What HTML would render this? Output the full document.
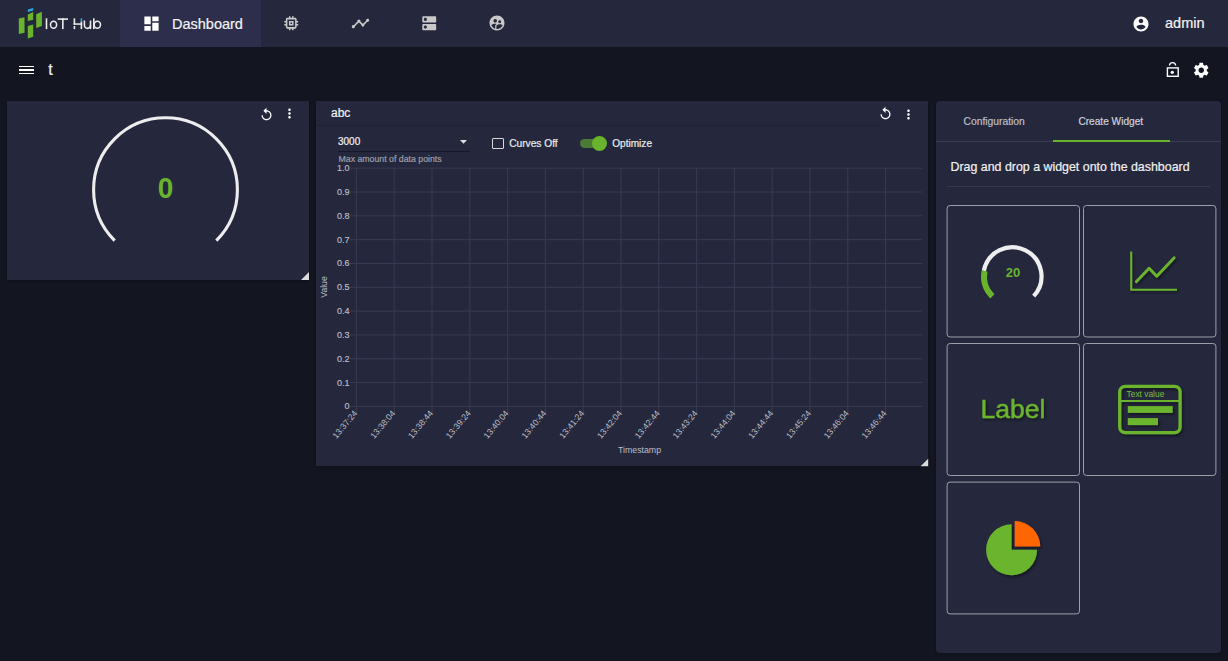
<!DOCTYPE html>
<html><head><meta charset="utf-8">
<style>
*{margin:0;padding:0;box-sizing:border-box}
html,body{width:1228px;height:661px;overflow:hidden;background:#131521;font-family:"Liberation Sans",sans-serif;color:#fff}
.abs{position:absolute}
.card{position:absolute;background:#25283d;box-shadow:0 1px 3px rgba(0,0,0,.3)}
.tile{position:absolute;border:1px solid #80828f;border-radius:3px}
.txt{position:absolute;white-space:nowrap;line-height:1;-webkit-text-stroke:0.2px currentColor}
</style></head><body>
<div class="abs" style="left:0px;top:0px;width:1228px;height:47px;background:#25283c;"></div>
<div class="abs" style="left:120px;top:0px;width:141px;height:47px;background:#2c2e4c;"></div>
<svg class="abs" style="left:0;top:0" width="120" height="47" viewBox="0 0 120 47">
  <polygon points="18.8,18.6 24.5,17.3 24.5,32.8 18.8,34" fill="#6ab42d"/>
  <polygon points="27.8,14.5 33.2,12.1 33.2,19.7 27.8,21.1" fill="#6ab42d"/>
  <polygon points="27.8,9.6 33.2,8 33.2,10.4 27.8,12.1" fill="#29a8e0"/>
  <polygon points="27.8,26 33.2,24.6 33.2,36.8 27.8,38.5" fill="#6ab42d"/>
  <polygon points="36.2,14.25 41.9,11.8 41.9,26 36.2,27.9" fill="#6ab42d"/>
  <g fill="#ececec">
   <rect x="45.7" y="18.3" width="1.6" height="10.8"/>
   <rect x="57.7" y="18.3" width="10.3" height="1.6"/>
   <rect x="62.05" y="18.3" width="1.6" height="10.8"/>
   <rect x="73.6" y="18.3" width="1.6" height="6.3"/>
   <rect x="73.6" y="26.0" width="1.6" height="3.1"/>
   <rect x="73.6" y="23.3" width="8.6" height="1.5"/>
   <rect x="80.6" y="21.4" width="1.6" height="7.7"/>
   <rect x="93" y="18.3" width="1.6" height="10.8"/>
  </g>
  <rect x="80.6" y="18.3" width="1.6" height="3.1" fill="#29a8e0"/>
  <g fill="none" stroke="#ececec" stroke-width="1.55">
   <ellipse cx="53.55" cy="24.8" rx="3.07" ry="3.5"/>
   <path d="M84.4 20.5 V25.3 A3.05 3.05 0 0 0 90.5 25.3 V20.5"/>
   <path d="M90.5 25.3 V29.1"/>
   <ellipse cx="97.35" cy="24.8" rx="3.17" ry="3.5"/>
  </g>
</svg>
<svg class="abs" style="left:141.6px;top:14.4px" width="19" height="19" viewBox="0 0 24 24"><path fill="#fff" d="M3 13h8V3H3v10zm0 8h8v-6H3v6zm10 0h8V11h-8v10zm0-18v6h8V3h-8z"/></svg>
<div class="txt" style="left:172px;top:16.5px;font-size:14.5px;color:#f2f2f2;">Dashboard</div>
<svg class="abs" style="left:281.95px;top:14.2px" width="18.5" height="18.5" viewBox="0 0 24 24"><path fill="#c8c8c8" d="M15 9H9v6h6V9zm-2 4h-2v-2h2v2zm8-2V9h-2V7c0-1.1-.9-2-2-2h-2V3h-2v2h-2V3H9v2H7c-1.1 0-2 .9-2 2v2H3v2h2v2H3v2h2v2c0 1.1.9 2 2 2h2v2h2v-2h2v2h2v-2h2c1.1 0 2-.9 2-2v-2h2v-2h-2v-2h2zm-4 6H7V7h10v10z"/></svg>
<svg class="abs" style="left:350.7px;top:13.5px" width="19" height="19" viewBox="0 0 24 24"><path fill="#c8c8c8" d="M23 8c0 1.1-.9 2-2 2-.18 0-.35-.02-.51-.07l-3.56 3.55c.05.16.07.34.07.52 0 1.1-.9 2-2 2s-2-.9-2-2c0-.18.02-.36.07-.52l-2.55-2.55c-.16.05-.34.07-.52.07s-.36-.02-.52-.07l-4.550 4.56c.05.16.07.33.07.51 0 1.1-.9 2-2 2s-2-.9-2-2 .9-2 2-2c.18 0 .35.02.51.07l4.56-4.55C8.02 9.36 8 9.18 8 9c0-1.1.9-2 2-2s2 .9 2 2c0 .18-.02.36-.07.52l2.55 2.55c.16-.05.34-.07.52-.07s.36.02.52.07l3.55-3.56C19.02 8.35 19 8.18 19 8c0-1.1.9-2 2-2s2 .9 2 2z"/></svg>
<svg class="abs" style="left:419.65px;top:14.1px" width="18.5" height="18.5" viewBox="0 0 24 24"><path fill="#c8c8c8" d="M20 13H4c-.55 0-1 .45-1 1v6c0 .55.45 1 1 1h16c.55 0 1-.45 1-1v-6c0-.55-.45-1-1-1zM7 19c-1.1 0-2-.9-2-2s.9-2 2-2 2 .9 2 2-.9 2-2 2zM20 3H4c-.55 0-1 .45-1 1v6c0 .55.45 1 1 1h16c.55 0 1-.45 1-1V4c0-.55-.45-1-1-1zM7 9c-1.1 0-2-.9-2-2s.9-2 2-2 2 .9 2 2-.9 2-2 2z"/></svg>
<svg class="abs" style="left:488.1px;top:14.3px" width="18" height="18" viewBox="0 0 24 24"><path fill="#c8c8c8" d="M11.99 2c-5.52 0-10 4.48-10 10s4.48 10 10 10 10-4.48 10-10-4.48-10-10-10zm3.61 6.34c1.07 0 1.93.86 1.93 1.93 0 1.07-.86 1.93-1.93 1.93-1.07 0-1.93-.86-1.930-1.93-.01-1.07.86-1.93 1.93-1.93zm-6-1.58c1.3 0 2.36 1.06 2.36 2.36 0 1.3-1.06 2.36-2.36 2.36s-2.36-1.06-2.36-2.36c0-1.31 1.05-2.36 2.36-2.36zm0 9.13v3.75c-2.4-.75-4.3-2.6-5.14-4.96 1.05-1.12 3.67-1.69 5.14-1.69.53 0 1.2.08 1.9.22-1.64.87-1.9 2.02-1.9 2.68zM11.99 20c-.27 0-.53-.01-.79-.04v-4.07c0-1.42 2.94-2.13 4.4-2.13 1.07 0 2.92.39 3.84 1.15-1.17 2.92-4.04 5.09-7.45 5.09z"/></svg>
<svg class="abs" style="left:1131.5px;top:15.2px" width="18" height="18" viewBox="0 0 24 24"><path fill="#fff" d="M12 2C6.48 2 2 6.48 2 12s4.48 10 10 10 10-4.48 10-10S17.52 2 12 2zm0 3c1.66 0 3 1.34 3 3s-1.34 3-3 3-3-1.34-3-3 1.34-3 3-3zm0 14.2c-2.5 0-4.71-1.28-6-3.22.03-1.99 4-3.08 6-3.08 1.99 0 5.970 1.09 6 3.08-1.29 1.94-3.5 3.22-6 3.22z"/></svg>
<div class="txt" style="left:1165px;top:16px;font-size:14.5px;color:#f2f2f2;">admin</div>
<div class="abs" style="left:19.3px;top:65.75px;width:14.4px;height:1.5px;background:#fff;"></div>
<div class="abs" style="left:19.3px;top:69.25px;width:14.4px;height:1.5px;background:#fff;"></div>
<div class="abs" style="left:19.3px;top:72.85px;width:14.4px;height:1.5px;background:#fff;"></div>
<div class="txt" style="left:48.2px;top:61.6px;font-size:16px;color:#f2f2f2;">t</div>
<svg class="abs" style="left:1160px;top:55px" width="25" height="28" viewBox="1160 55 25 28">
 <path d="M1169.5 65.6 A3.05 3.05 0 0 1 1175.6 65.6" fill="none" stroke="#fff" stroke-width="1.3"/>
 <rect x="1167.4" y="67.9" width="10.8" height="8.4" fill="none" stroke="#fff" stroke-width="1.4"/>
 <circle cx="1172.3" cy="72.3" r="1.6" fill="#fff"/>
</svg>
<svg class="abs" style="left:1192.4px;top:60.65px" width="18.5" height="18.5" viewBox="0 0 24 24"><path fill="#fff" d="M19.14 12.94c.04-.3.06-.61.06-.94 0-.32-.02-.64-.07-.94l2.03-1.58c.18-.14.23-.41.12-.61l-1.92-3.32c-.12-.22-.37-.29-.59-.22l-2.39.96c-.5-.38-1.03-.7-1.62-.94l-.36-2.54c-.04-.24-.24-.41-.48-.41h-3.84c-.24 0-.43.17-.47.41l-.36 2.54c-.59.24-1.13.57-1.62.94l-2.39-.96c-.22-.08-.47 0-.59.22L2.74 8.87c-.12.21-.08.47.12.61l2.03 1.58c-.05.3-.09.63-.09.94s.02.64.07.94l-2.03 1.58c-.18.14-.23.41-.12.61l1.92 3.32c.12.22.37.29.59.22l2.39-.96c.5.38 1.03.7 1.62.94l.36 2.54c.05.24.24.41.48.41h3.84c.24 0 .44-.17.47-.41l.36-2.54c.59-.24 1.13-.56 1.62-.94l2.39.96c.22.08.47 0 .59-.22l1.92-3.32c.12-.22.07-.47-.12-.61l-2.01-1.58zM12 15.6c-1.98 0-3.6-1.62-3.6-3.6s1.62-3.6 3.6-3.6 3.6 1.62 3.6 3.6-1.62 3.6-3.6 3.6z"/></svg>
<div class="card" style="left:7px;top:101px;width:302px;height:179px"></div>
<svg class="abs" style="left:7px;top:101px" width="302" height="179" viewBox="7 101 302 179">
  <path d="M 114.66 240.54 A 71.9 71.9 0 1 1 216.34 240.54" fill="none" stroke="#ededed" stroke-width="3.1"/>
  <text transform="translate(165.4,197.6) scale(0.98,1.067)" text-anchor="middle" font-family="Liberation Sans" font-weight="bold" font-size="28.5" fill="#6ab42d">0</text>
  <polygon points="301,280 309,272 309,280" fill="#dcdcdc"/>
</svg>
<svg class="abs" style="left:258.5px;top:106.5px" width="15" height="15" viewBox="0 0 24 24"><path fill="#fff" d="M12 5V1L7 6l5 5V7c3.31 0 6 2.69 6 6s-2.69 6-6 6-6-2.690-6-6H4c0 4.42 3.58 8 8 8s8-3.58 8-8-3.58-8-8-8z"/></svg>
<svg class="abs" style="left:281.8px;top:106px" width="15" height="15" viewBox="0 0 24 24"><path fill="#fff" d="M12 8c1.1 0 2-.9 2-2s-.9-2-2-2-2 .9-2 2 .9 2 2 2zm0 2c-1.1 0-2 .9-2 2s.9 2 2 2 2-.9 2-2-.9-2-2-2zm0 6c-1.1 0-2 .9-2 2s.9 2 2 2 2-.9 2-2-.9-2-2-2z"/></svg>
<div class="card" style="left:316.4px;top:101px;width:611.8px;height:365px"></div>
<div class="abs" style="left:316.4px;top:124.6px;width:565.4px;height:1px;background:#1f2133;"></div>
<div class="txt" style="left:331px;top:107px;font-size:12px;color:#f2f2f2;">abc</div>
<svg class="abs" style="left:877.5px;top:106px" width="15" height="15" viewBox="0 0 24 24"><path fill="#fff" d="M12 5V1L7 6l5 5V7c3.31 0 6 2.69 6 6s-2.69 6-6 6-6-2.690-6-6H4c0 4.42 3.58 8 8 8s8-3.58 8-8-3.58-8-8-8z"/></svg>
<svg class="abs" style="left:901px;top:106.5px" width="15" height="15" viewBox="0 0 24 24"><path fill="#fff" d="M12 8c1.1 0 2-.9 2-2s-.9-2-2-2-2 .9-2 2 .9 2 2 2zm0 2c-1.1 0-2 .9-2 2s.9 2 2 2 2-.9 2-2-.9-2-2-2zm0 6c-1.1 0-2 .9-2 2s.9 2 2 2 2-.9 2-2-.9-2-2-2z"/></svg>
<div class="txt" style="left:338px;top:137px;font-size:10px;color:#f2f2f2;">3000</div>
<svg class="abs" style="left:460px;top:140px" width="8" height="5"><polygon points="0,0 7,0 3.5,3.7" fill="#e0e0e0"/></svg>
<div class="abs" style="left:338px;top:151px;width:132px;height:1px;background:#17192a;"></div>
<div class="txt" style="left:338.5px;top:155px;font-size:8.75px;color:#9c9da6;">Max amount of data points</div>
<div class="abs" style="left:492px;top:138px;width:12px;height:11px;border:1.5px solid #d8d8d8;border-radius:1px"></div>
<div class="txt" style="left:509.2px;top:138.7px;font-size:10.2px;color:#eaeaea;">Curves Off</div>
<div class="abs" style="left:580px;top:139px;width:24px;height:9px;background:#4b7a34;border-radius:4.5px"></div>
<div class="abs" style="left:592px;top:136px;width:15px;height:15px;background:#6ab42d;border-radius:50%"></div>
<div class="txt" style="left:612.2px;top:138.7px;font-size:10.1px;color:#eaeaea;">Optimize</div>
<svg class="abs" style="left:317px;top:101px" width="611" height="365" viewBox="317 101 611 365" font-family="Liberation Sans"><line x1="350" y1="406.40" x2="922.1" y2="406.40" stroke="#383b54"/>
<text x="349.5" y="409.40" text-anchor="end" font-size="9" fill="#bdbdc4" stroke="#bdbdc4" stroke-width="0.15">0</text>
<line x1="350" y1="382.58" x2="922.1" y2="382.58" stroke="#383b54"/>
<text x="349.5" y="385.58" text-anchor="end" font-size="9" fill="#bdbdc4" stroke="#bdbdc4" stroke-width="0.15">0.1</text>
<line x1="350" y1="358.76" x2="922.1" y2="358.76" stroke="#383b54"/>
<text x="349.5" y="361.76" text-anchor="end" font-size="9" fill="#bdbdc4" stroke="#bdbdc4" stroke-width="0.15">0.2</text>
<line x1="350" y1="334.94" x2="922.1" y2="334.94" stroke="#383b54"/>
<text x="349.5" y="337.94" text-anchor="end" font-size="9" fill="#bdbdc4" stroke="#bdbdc4" stroke-width="0.15">0.3</text>
<line x1="350" y1="311.12" x2="922.1" y2="311.12" stroke="#383b54"/>
<text x="349.5" y="314.12" text-anchor="end" font-size="9" fill="#bdbdc4" stroke="#bdbdc4" stroke-width="0.15">0.4</text>
<line x1="350" y1="287.30" x2="922.1" y2="287.30" stroke="#383b54"/>
<text x="349.5" y="290.30" text-anchor="end" font-size="9" fill="#bdbdc4" stroke="#bdbdc4" stroke-width="0.15">0.5</text>
<line x1="350" y1="263.48" x2="922.1" y2="263.48" stroke="#383b54"/>
<text x="349.5" y="266.48" text-anchor="end" font-size="9" fill="#bdbdc4" stroke="#bdbdc4" stroke-width="0.15">0.6</text>
<line x1="350" y1="239.66" x2="922.1" y2="239.66" stroke="#383b54"/>
<text x="349.5" y="242.66" text-anchor="end" font-size="9" fill="#bdbdc4" stroke="#bdbdc4" stroke-width="0.15">0.7</text>
<line x1="350" y1="215.84" x2="922.1" y2="215.84" stroke="#383b54"/>
<text x="349.5" y="218.84" text-anchor="end" font-size="9" fill="#bdbdc4" stroke="#bdbdc4" stroke-width="0.15">0.8</text>
<line x1="350" y1="192.02" x2="922.1" y2="192.02" stroke="#383b54"/>
<text x="349.5" y="195.02" text-anchor="end" font-size="9" fill="#bdbdc4" stroke="#bdbdc4" stroke-width="0.15">0.9</text>
<line x1="350" y1="168.20" x2="922.1" y2="168.20" stroke="#383b54"/>
<text x="349.5" y="171.20" text-anchor="end" font-size="9" fill="#bdbdc4" stroke="#bdbdc4" stroke-width="0.15">1.0</text>
<line x1="356.40" y1="168.2" x2="356.40" y2="412.5" stroke="#383b54"/>
<text transform="translate(357.90,413.5) rotate(-50)" text-anchor="end" font-size="8.6" fill="#bdbdc4">13:37:24</text>
<line x1="394.20" y1="168.2" x2="394.20" y2="412.5" stroke="#383b54"/>
<text transform="translate(395.70,413.5) rotate(-50)" text-anchor="end" font-size="8.6" fill="#bdbdc4">13:38:04</text>
<line x1="432.00" y1="168.2" x2="432.00" y2="412.5" stroke="#383b54"/>
<text transform="translate(433.50,413.5) rotate(-50)" text-anchor="end" font-size="8.6" fill="#bdbdc4">13:38:44</text>
<line x1="469.80" y1="168.2" x2="469.80" y2="412.5" stroke="#383b54"/>
<text transform="translate(471.30,413.5) rotate(-50)" text-anchor="end" font-size="8.6" fill="#bdbdc4">13:39:24</text>
<line x1="507.60" y1="168.2" x2="507.60" y2="412.5" stroke="#383b54"/>
<text transform="translate(509.10,413.5) rotate(-50)" text-anchor="end" font-size="8.6" fill="#bdbdc4">13:40:04</text>
<line x1="545.40" y1="168.2" x2="545.40" y2="412.5" stroke="#383b54"/>
<text transform="translate(546.90,413.5) rotate(-50)" text-anchor="end" font-size="8.6" fill="#bdbdc4">13:40:44</text>
<line x1="583.20" y1="168.2" x2="583.20" y2="412.5" stroke="#383b54"/>
<text transform="translate(584.70,413.5) rotate(-50)" text-anchor="end" font-size="8.6" fill="#bdbdc4">13:41:24</text>
<line x1="621.00" y1="168.2" x2="621.00" y2="412.5" stroke="#383b54"/>
<text transform="translate(622.50,413.5) rotate(-50)" text-anchor="end" font-size="8.6" fill="#bdbdc4">13:42:04</text>
<line x1="658.80" y1="168.2" x2="658.80" y2="412.5" stroke="#383b54"/>
<text transform="translate(660.30,413.5) rotate(-50)" text-anchor="end" font-size="8.6" fill="#bdbdc4">13:42:44</text>
<line x1="696.60" y1="168.2" x2="696.60" y2="412.5" stroke="#383b54"/>
<text transform="translate(698.10,413.5) rotate(-50)" text-anchor="end" font-size="8.6" fill="#bdbdc4">13:43:24</text>
<line x1="734.40" y1="168.2" x2="734.40" y2="412.5" stroke="#383b54"/>
<text transform="translate(735.90,413.5) rotate(-50)" text-anchor="end" font-size="8.6" fill="#bdbdc4">13:44:04</text>
<line x1="772.20" y1="168.2" x2="772.20" y2="412.5" stroke="#383b54"/>
<text transform="translate(773.70,413.5) rotate(-50)" text-anchor="end" font-size="8.6" fill="#bdbdc4">13:44:44</text>
<line x1="810.00" y1="168.2" x2="810.00" y2="412.5" stroke="#383b54"/>
<text transform="translate(811.50,413.5) rotate(-50)" text-anchor="end" font-size="8.6" fill="#bdbdc4">13:45:24</text>
<line x1="847.80" y1="168.2" x2="847.80" y2="412.5" stroke="#383b54"/>
<text transform="translate(849.30,413.5) rotate(-50)" text-anchor="end" font-size="8.6" fill="#bdbdc4">13:46:04</text>
<line x1="885.60" y1="168.2" x2="885.60" y2="412.5" stroke="#383b54"/>
<text transform="translate(887.10,413.5) rotate(-50)" text-anchor="end" font-size="8.6" fill="#bdbdc4">13:46:44</text>
<text transform="translate(327,287) rotate(-90)" text-anchor="middle" font-size="8.6" fill="#bdbdc4">Value</text>
<text x="639.5" y="453" text-anchor="middle" font-size="8.8" fill="#bdbdc4">Timestamp</text></svg>
<svg class="abs" style="left:917px;top:457px" width="12" height="10"><polygon points="3.6,9.3 11.2,1.7 11.2,9.3" fill="#dcdcdc"/></svg>
<div class="card" style="left:936px;top:101px;width:285px;height:552px;border-radius:4px"></div>
<div class="txt" style="left:963.5px;top:116.7px;font-size:10.3px;color:#bdbec6;">Configuration</div>
<div class="txt" style="left:1078.4px;top:116.8px;font-size:10.15px;color:#d0d1d8;">Create Widget</div>
<div class="abs" style="left:936px;top:141px;width:285px;height:1px;background:#3a3d52;"></div>
<div class="abs" style="left:1052.5px;top:139.5px;width:117.5px;height:2px;background:#6ab42d;"></div>
<div class="txt" style="left:950.5px;top:160.5px;font-size:12.4px;color:#f0f0f0;">Drag and drop a widget onto the dashboard</div>
<div class="abs" style="left:947px;top:186px;width:263px;height:1px;background:#353850;"></div>
<svg class="abs" style="left:936px;top:195px" width="285" height="430" viewBox="936 195 285 430"><rect x="947.1" y="205.5" width="132.4" height="131.5" rx="3" fill="none" stroke="#9c9ea9" stroke-width="1"/><rect x="1083.5" y="205.5" width="132.4" height="131.5" rx="3" fill="none" stroke="#9c9ea9" stroke-width="1"/><rect x="947.1" y="343.5" width="132.4" height="132" rx="3" fill="none" stroke="#9c9ea9" stroke-width="1"/><rect x="1083.5" y="343.5" width="132.4" height="132" rx="3" fill="none" stroke="#9c9ea9" stroke-width="1"/><rect x="947.1" y="482.1" width="132.4" height="131.8" rx="3" fill="none" stroke="#9c9ea9" stroke-width="1"/></svg>
<svg class="abs" style="left:936px;top:201px" width="285" height="420" viewBox="936 201 285 420" font-family="Liberation Sans">
  <defs>
    <filter id="sh" x="-30%" y="-30%" width="160%" height="160%"><feDropShadow dx="1.5" dy="2" stdDeviation="1.5" flood-color="#000" flood-opacity="0.45"/></filter>
  </defs>
  <path d="M 983.82 270.85 A 29.1 29.1 0 1 1 1033.68 296.15" fill="none" stroke="#eeeeee" stroke-width="4.2"/>
  <path d="M 992.35 296.35 A 28.35 28.35 0 0 1 984.57 270.89" fill="none" stroke="#6ab42d" stroke-width="5.9"/>
  <text x="1013" y="277.2" text-anchor="middle" font-weight="bold" font-size="13" fill="#6ab42d">20</text>
  <g filter="url(#sh)">
    <polyline points="1131.2,251.4 1131.2,289.8 1177,289.8" fill="none" stroke="#6ab42d" stroke-width="2"/>
    <polyline points="1136.3,281.8 1149.1,268.2 1156.8,276.3 1174.2,257.7" fill="none" stroke="#6ab42d" stroke-width="2.8" stroke-linecap="round" stroke-linejoin="round"/>
  </g>
  <text x="1013" y="418" text-anchor="middle" font-size="26.5" fill="#6ab42d" stroke="#6ab42d" stroke-width="0.45" filter="url(#sh)">Label</text>
  <g filter="url(#sh)">
  <rect x="1119.7" y="386.3" width="60.4" height="46.3" rx="5.5" fill="none" stroke="#6ab42d" stroke-width="3.3"/>
  <line x1="1119.7" y1="401" x2="1180.1" y2="401" stroke="#6ab42d" stroke-width="2"/>
  <rect x="1127.8" y="406.1" width="44.9" height="6.8" fill="#6ab42d"/>
  <rect x="1127.8" y="418.1" width="30.2" height="7" fill="#6ab42d"/>
  </g>
  <text x="1126.6" y="397" font-size="8.4" fill="#78be3e">Text value</text>
  <g filter="url(#sh)">
  <path d="M 1011.6 549.7 L 1011.6 524.2 A 25.5 25.5 0 1 0 1037.1 549.7 Z" fill="#6ab42d"/>
  <path d="M 1014.7 546.5 L 1014.7 521 A 25.5 25.5 0 0 1 1040.2 546.5 Z" fill="#ff6600"/>
  </g>
</svg>
</body></html>
